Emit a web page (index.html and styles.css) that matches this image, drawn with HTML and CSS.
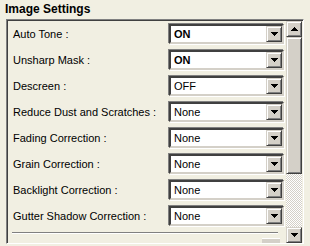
FILE: index.html
```html
<!DOCTYPE html>
<html lang="en">
<head>
  <meta charset="UTF-8">
  <title>Image Settings</title>
  <link rel="stylesheet" href="styles.css">
</head>
<body>
  <div class="title">Image Settings</div>
  <div class="frame">
    <div class="content">
      <div class="row">
        <span class="label">Auto Tone :</span>
        <div class="combo"><span class="value bold">ON</span><span class="btn"><svg width="7" height="4"><path d="M0 0h7v1H0zM1 1h5v1H1zM2 2h3v1H2zM3 3h1v1H3z"/></svg></span></div>
      </div>
      <div class="row">
        <span class="label">Unsharp Mask :</span>
        <div class="combo"><span class="value bold">ON</span><span class="btn"><svg width="7" height="4"><path d="M0 0h7v1H0zM1 1h5v1H1zM2 2h3v1H2zM3 3h1v1H3z"/></svg></span></div>
      </div>
      <div class="row">
        <span class="label">Descreen :</span>
        <div class="combo"><span class="value">OFF</span><span class="btn"><svg width="7" height="4"><path d="M0 0h7v1H0zM1 1h5v1H1zM2 2h3v1H2zM3 3h1v1H3z"/></svg></span></div>
      </div>
      <div class="row">
        <span class="label">Reduce Dust and Scratches :</span>
        <div class="combo"><span class="value">None</span><span class="btn"><svg width="7" height="4"><path d="M0 0h7v1H0zM1 1h5v1H1zM2 2h3v1H2zM3 3h1v1H3z"/></svg></span></div>
      </div>
      <div class="row">
        <span class="label">Fading Correction :</span>
        <div class="combo"><span class="value">None</span><span class="btn"><svg width="7" height="4"><path d="M0 0h7v1H0zM1 1h5v1H1zM2 2h3v1H2zM3 3h1v1H3z"/></svg></span></div>
      </div>
      <div class="row">
        <span class="label">Grain Correction :</span>
        <div class="combo"><span class="value">None</span><span class="btn"><svg width="7" height="4"><path d="M0 0h7v1H0zM1 1h5v1H1zM2 2h3v1H2zM3 3h1v1H3z"/></svg></span></div>
      </div>
      <div class="row">
        <span class="label">Backlight Correction :</span>
        <div class="combo"><span class="value">None</span><span class="btn"><svg width="7" height="4"><path d="M0 0h7v1H0zM1 1h5v1H1zM2 2h3v1H2zM3 3h1v1H3z"/></svg></span></div>
      </div>
      <div class="row">
        <span class="label">Gutter Shadow Correction :</span>
        <div class="combo"><span class="value">None</span><span class="btn"><svg width="7" height="4"><path d="M0 0h7v1H0zM1 1h5v1H1zM2 2h3v1H2zM3 3h1v1H3z"/></svg></span></div>
      </div>
      <div class="separator"></div>
      <div class="peek"></div>
    </div>
    <div class="scrollbar">
      <div class="sb-btn"><svg width="7" height="4"><path d="M3 0h1v1H3zM2 1h3v1H2zM1 2h5v1H1zM0 3h7v1H0z"/></svg></div>
      <div class="sb-thumb"></div>
      <div class="sb-track"></div>
      <div class="sb-btn"><svg width="7" height="4"><path d="M0 0h7v1H0zM1 1h5v1H1zM2 2h3v1H2zM3 3h1v1H3z"/></svg></div>
    </div>
  </div>
</body>
</html>
```

FILE: styles.css
```css
body {
  margin: 0;
  background: #f1efe2;
  font-family: "Liberation Sans", Arial, sans-serif;
  font-size: 11px;
  color: #000;
  width: 310px;
  height: 246px;
  overflow: hidden;
}
.title {
  height: 19px;
  padding-left: 5px;
  font-size: 12px;
  font-weight: bold;
  line-height: 18px;
}
.frame {
  margin-left: 6px;
  width: 296px;
  height: 223px;
  display: flex;
  border-top: 1px solid #808080;
  border-left: 1px solid #808080;
  border-right: 1px solid #fff;
  border-bottom: 1px solid #fff;
  box-shadow: inset 1px 1px #404040;
}
.content {
  flex: 1;
  padding: 4px 0 0 6px;
  display: flex;
  flex-direction: column;
  gap: 6px;
  overflow: hidden;
}
.row {
  display: flex;
  align-items: center;
  height: 20px;
  flex: none;
}
.label {
  width: 155px;
  white-space: nowrap;
}
.combo {
  width: 111px;
  height: 16px;
  display: flex;
  align-items: center;
  justify-content: space-between;
  background: #fff;
  border-top: 2px solid #404040;
  border-left: 2px solid #404040;
  border-right: 2px solid #d4d0c8;
  border-bottom: 2px solid #d4d0c8;
  box-shadow: -1px -1px #808080, 1px 1px #fff;
  margin-left: 1px;
}
.value {
  padding-left: 3px;
}
.bold {
  font-weight: bold;
}
.btn, .sb-btn {
  width: 14px;
  height: 14px;
  display: flex;
  align-items: center;
  justify-content: center;
  background: #d4d0c8;
  border-top: 1px solid #d4d0c8;
  border-left: 1px solid #d4d0c8;
  border-right: 1px solid #404040;
  border-bottom: 1px solid #404040;
  box-shadow: inset 1px 1px #fff, inset -1px -1px #808080;
  flex: none;
}
.btn svg, .sb-btn svg {
  display: block;
}
.separator {
  margin-left: -1px;
  width: 266px;
  height: 1px;
  background: #808080;
  border-bottom: 1px solid #fff;
  flex: none;
}
.peek {
  margin: -2px 0 0 249px;
  width: 18px;
  height: 8px;
  background: #d4d0c8;
  border-top: 1px solid #fff;
  flex: none;
}
.scrollbar {
  width: 16px;
  margin: 1px 1px 0 0;
  display: flex;
  flex-direction: column;
}
.sb-thumb {
  height: 135px;
  background: #d4d0c8;
  border-top: 1px solid #d4d0c8;
  border-left: 1px solid #d4d0c8;
  border-right: 1px solid #404040;
  border-bottom: 1px solid #404040;
  box-shadow: inset 1px 1px #fff, inset -1px -1px #808080;
}
.sb-track {
  flex: 1;
  background: repeating-conic-gradient(#fff 0 25%, #d4d0c8 0 50%) 0 0 / 2px 2px;
}
```
